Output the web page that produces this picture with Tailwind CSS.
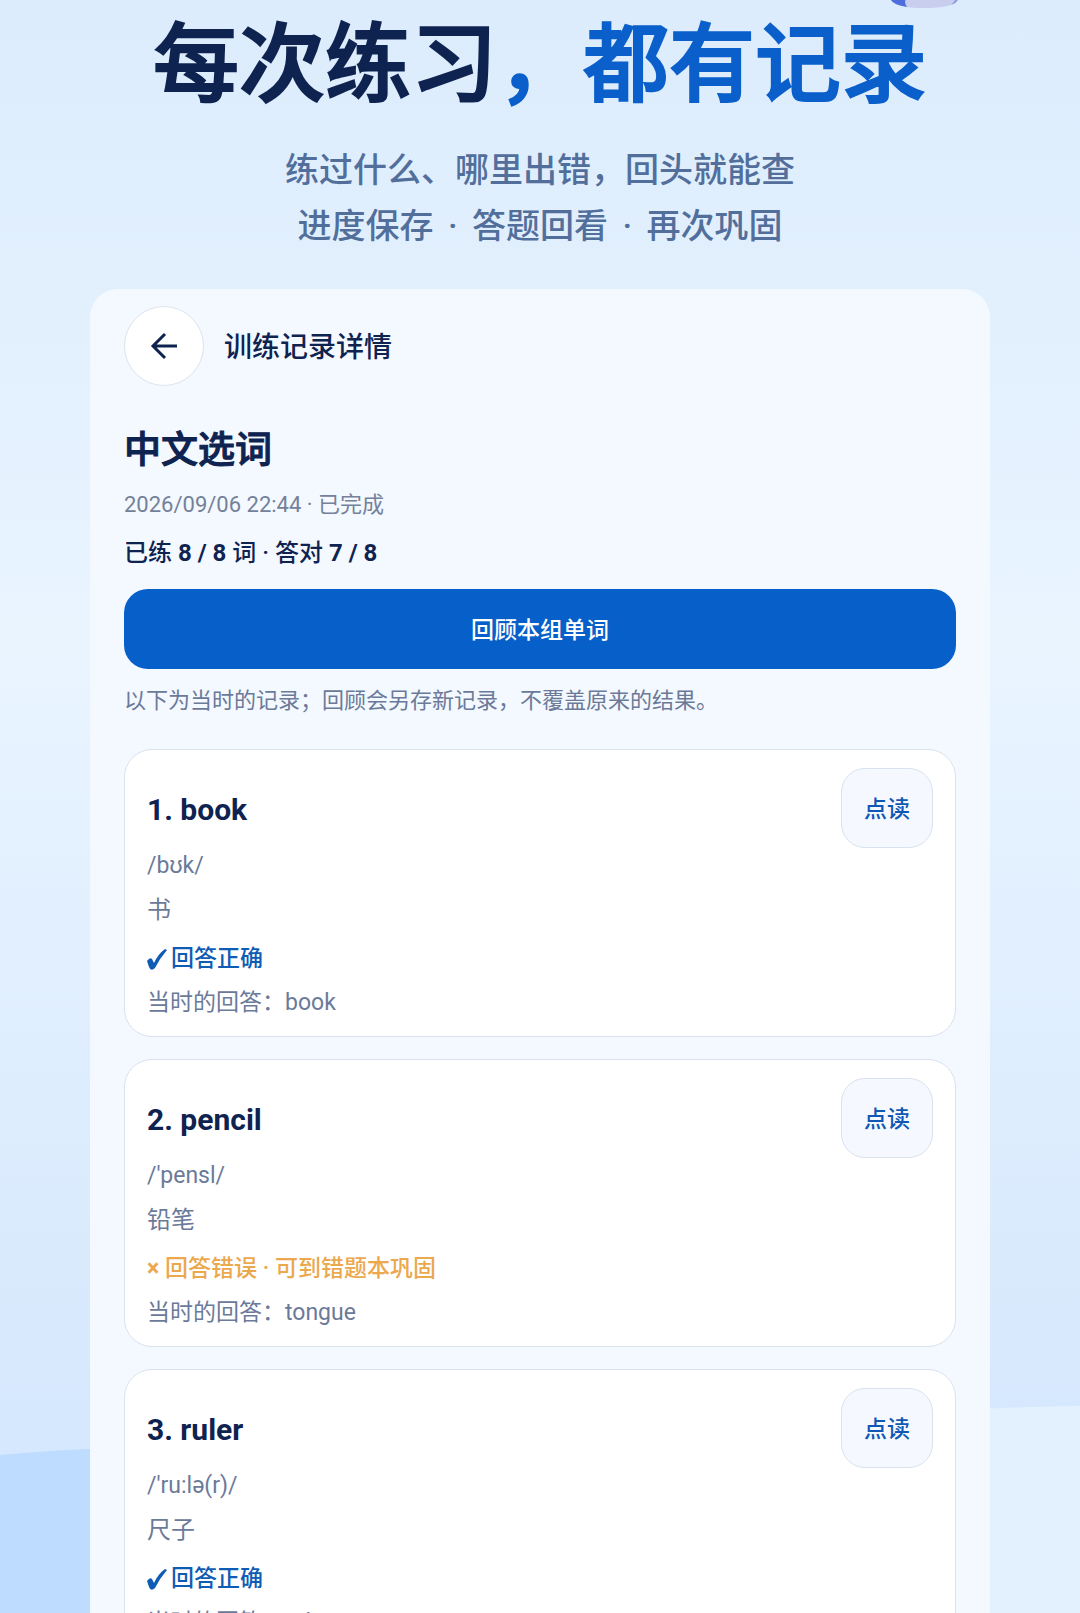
<!DOCTYPE html>
<html lang="zh-CN">
<head>
	<meta charset="UTF-8">
	<meta name="viewport" content="width=device-width, initial-scale=1.0">
	<script src="https://cdn.jsdelivr.net/npm/@tailwindcss/browser@4"></script>
	<title>训练记录详情</title>
</head>

<body class="h-screen overflow-hidden bg-[#dfeefd] font-['Roboto','Noto_Sans_CJK_SC',sans-serif] text-[#0f2350]">
	<div class="relative h-screen overflow-hidden bg-linear-to-b from-[#dcecfc] from-0% via-[#e9f4ff] via-40% to-[#d6e8fd] to-87%">
		<!-- Background hills -->
		<svg class="absolute inset-x-0 bottom-0 w-full h-[210px]" viewBox="0 0 1080 210" preserveAspectRatio="none" aria-hidden="true">
			<path d="M700 40 Q900 4 1080 3 V210 H700 Z" fill="#e3f1ff"/>
			<path d="M0 52 Q60 47 90 46 Q300 44 700 120 V210 H0 Z" fill="#bddcff"/>
		</svg>
		<!-- Mascot foot -->
		<svg class="absolute top-0 right-[121px] w-[69px] h-[9px]" viewBox="0 0 72 9" preserveAspectRatio="none" aria-hidden="true">
			<path d="M1 0 Q5 8 35 8 Q66 8 71 0 Z" fill="#c9cdee"/>
			<path d="M1 0 Q4 5 18 7 Q15 4 16 0 Z" fill="#4c6fdc"/>
			<path d="M68 0 L71 0 Q69 3 64 5 Z" fill="#8f9ce0"/>
		</svg>

		<header class="relative pt-[10px] text-center">
			<h1 class="text-[86px] leading-[112px] font-medium [-webkit-text-stroke:2px]">每次练习<span class="text-[#0a5fcb]">，都有记录</span></h1>
			<p class="mt-5 text-[34px] leading-14 font-medium text-[#526f9c]">练过什么、哪里出错，回头就能查<br>进度保存 <span class="mx-[6px]">·</span> 答题回看 <span class="mx-[6px]">·</span> 再次巩固</p>
		</header>

		<main class="relative mx-[90px] mt-[35px] px-[34px] pt-[17px] rounded-t-[28px] bg-[#f4f8ff]">
			<div class="flex items-center gap-5">
				<button type="button" aria-label="返回" class="flex items-center justify-center size-20 rounded-full border border-[#dde4ed] bg-white">
					<svg class="size-7" viewBox="0 0 28 28" fill="none" stroke="#0f2350" stroke-width="3" aria-hidden="true">
						<path d="M27 14 H3 M15 2 L3 14 L15 26"/>
					</svg>
				</button>
				<h2 class="pt-1 text-[28px] leading-10 font-medium">训练记录详情</h2>
			</div>

			<h3 class="mt-[37px] text-[37px] leading-14 font-medium [-webkit-text-stroke:1px]">中文选词</h3>
			<p class="mt-[10px] text-[22px] leading-8 text-[#74819a]">2026/09/06 22:44 · 已完成</p>
			<p class="mt-4 text-[24px] leading-8 font-medium">已练 <b>8 / 8</b> 词 · 答对 <b>7 / 8</b></p>
			<button type="button" class="mt-5 w-full h-20 pt-1 rounded-3xl bg-[#075fca] text-[23px] font-medium text-white">回顾本组单词</button>
			<p class="mt-4 text-[22px] leading-8 text-[#6b7a99]">以下为当时的记录；回顾会另存新记录，不覆盖原来的结果。</p>

			<ul class="mt-8 flex flex-col gap-[22px]">
				<li class="h-[288px] px-[22px] pt-[18px] rounded-[28px] border border-[#d9e2ee] bg-white text-[23px] leading-8 text-[#6b7a99]">
					<div class="flex items-center justify-between">
						<h4 class="pt-1 text-[30px] font-bold text-[#0f2350]">1. book</h4>
						<button type="button" class="h-20 px-[22px] pt-1 rounded-3xl border border-[#d9e2ee] bg-[#f5f9ff] font-medium text-[#0f58b4]">点读</button>
					</div>
					<p class="mt-[2px]">/bʊk/</p>
					<p class="mt-3 text-[24px]">书</p>
					<p class="mt-[17px] flex items-center gap-1 font-medium text-[#0f5cb5]">
						<svg class="w-5 h-[22px]" viewBox="0 0 20 22" fill="currentColor" aria-hidden="true"><path d="M0 13 Q3 9 5 11 L7 15 Q11 6 18 1 L20 2 Q13 10 8 20 Q4 24 2 19 Z"/></svg>
						<span>回答正确</span>
					</p>
					<p class="mt-3">当时的回答：book</p>
				</li>
				<li class="h-[288px] px-[22px] pt-[18px] rounded-[28px] border border-[#d9e2ee] bg-white text-[23px] leading-8 text-[#6b7a99]">
					<div class="flex items-center justify-between">
						<h4 class="pt-1 text-[30px] font-bold text-[#0f2350]">2. pencil</h4>
						<button type="button" class="h-20 px-[22px] pt-1 rounded-3xl border border-[#d9e2ee] bg-[#f5f9ff] font-medium text-[#0f58b4]">点读</button>
					</div>
					<p class="mt-[2px]">/'pensl/</p>
					<p class="mt-3 text-[24px]">铅笔</p>
					<p class="mt-[17px] font-medium text-[#eba84d]"><b>×</b> 回答错误 · 可到错题本巩固</p>
					<p class="mt-3">当时的回答：tongue</p>
				</li>
				<li class="h-[288px] px-[22px] pt-[18px] rounded-[28px] border border-[#d9e2ee] bg-white text-[23px] leading-8 text-[#6b7a99]">
					<div class="flex items-center justify-between">
						<h4 class="pt-1 text-[30px] font-bold text-[#0f2350]">3. ruler</h4>
						<button type="button" class="h-20 px-[22px] pt-1 rounded-3xl border border-[#d9e2ee] bg-[#f5f9ff] font-medium text-[#0f58b4]">点读</button>
					</div>
					<p class="mt-[2px]">/'ru:lə(r)/</p>
					<p class="mt-3 text-[24px]">尺子</p>
					<p class="mt-[17px] flex items-center gap-1 font-medium text-[#0f5cb5]">
						<svg class="w-5 h-[22px]" viewBox="0 0 20 22" fill="currentColor" aria-hidden="true"><path d="M0 13 Q3 9 5 11 L7 15 Q11 6 18 1 L20 2 Q13 10 8 20 Q4 24 2 19 Z"/></svg>
						<span>回答正确</span>
					</p>
					<p class="mt-3">当时的回答：ruler</p>
				</li>
			</ul>
		</main>
	</div>
</body>
</html>
